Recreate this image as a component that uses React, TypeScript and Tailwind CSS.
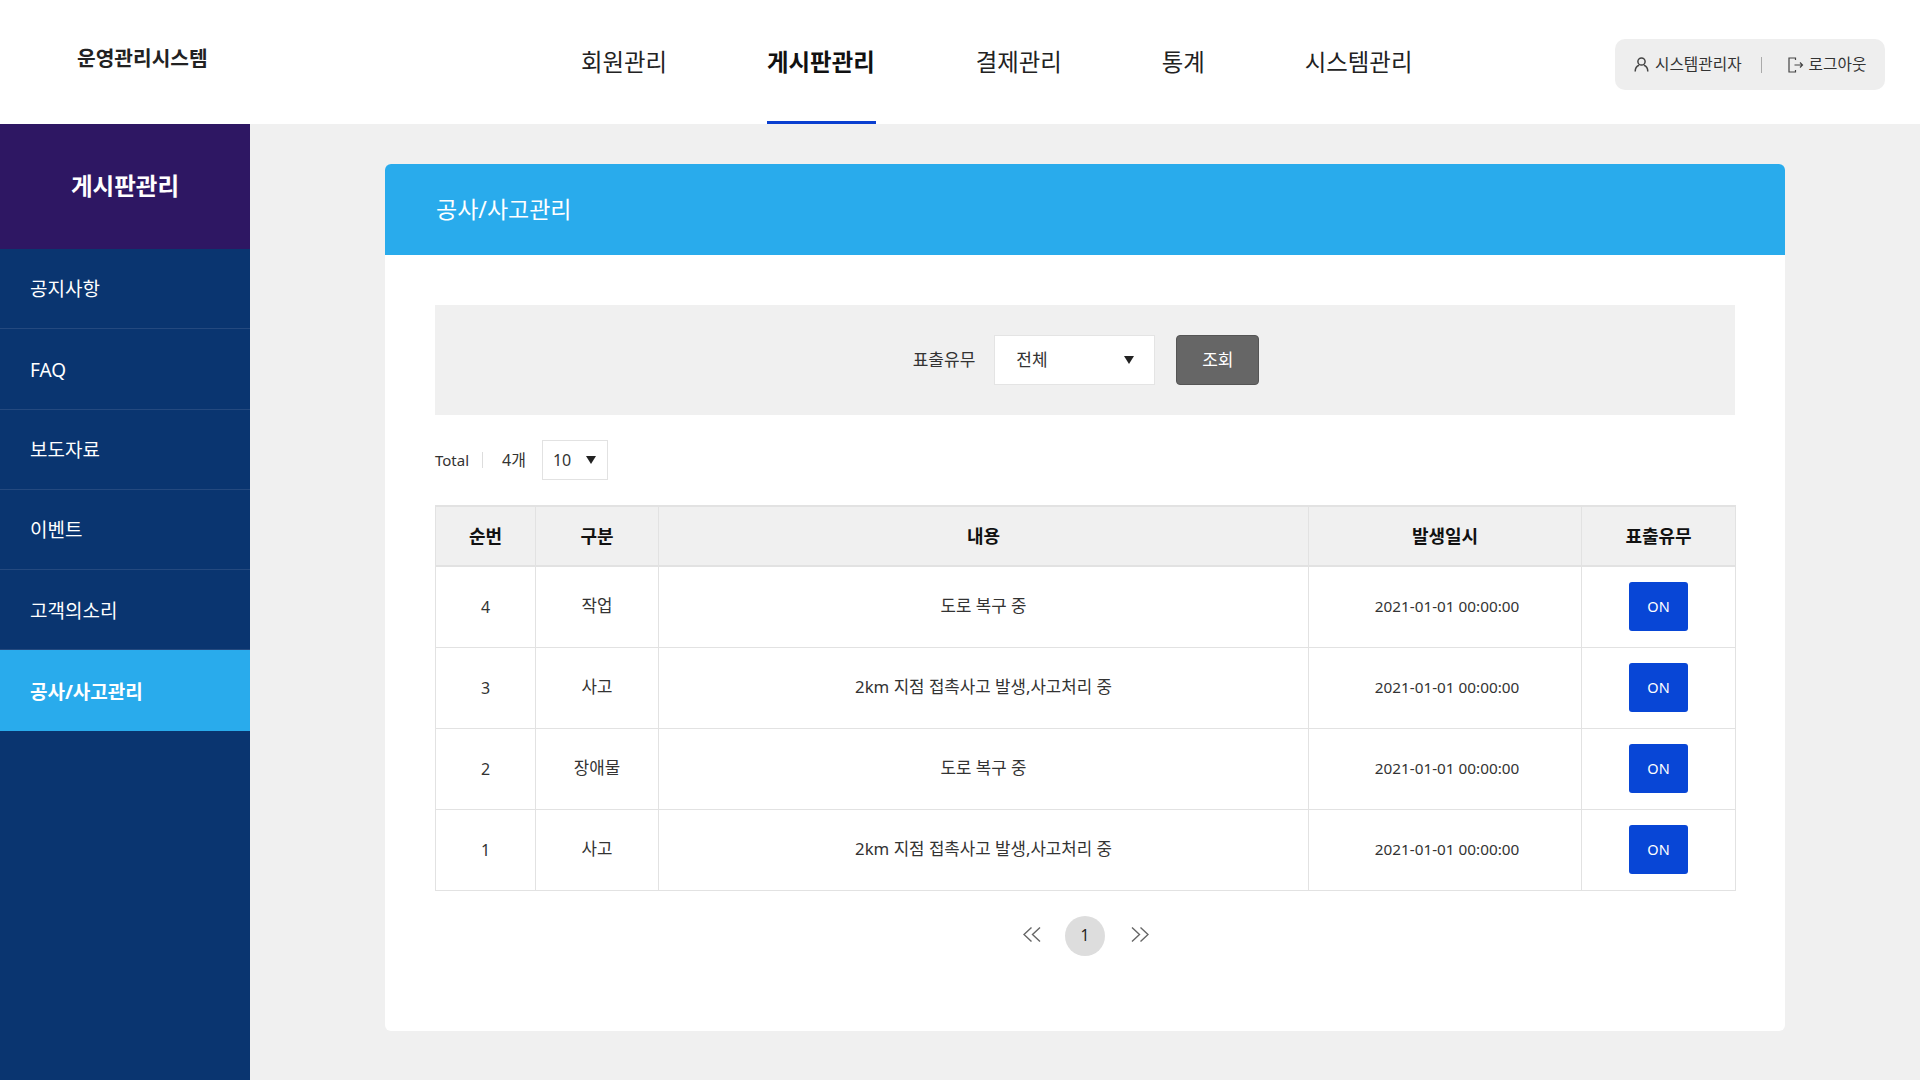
const FONT = 'font-["Noto_Sans","Noto_Sans_CJK_KR",sans-serif]'

const navItems = ['회원관리', '게시판관리', '결제관리', '통계', '시스템관리']
const sideItems = ['공지사항', 'FAQ', '보도자료', '이벤트', '고객의소리', '공사/사고관리']

const rows = [
  { no: 4, type: '작업', content: '도로 복구 중', date: '2021-01-01 00:00:00' },
  { no: 3, type: '사고', content: '2km 지점 접촉사고 발생,사고처리 중', date: '2021-01-01 00:00:00' },
  { no: 2, type: '장애물', content: '도로 복구 중', date: '2021-01-01 00:00:00' },
  { no: 1, type: '사고', content: '2km 지점 접촉사고 발생,사고처리 중', date: '2021-01-01 00:00:00' },
]

function Caret() {
  return (
    <svg width="10" height="8" viewBox="0 0 10 8" className="shrink-0">
      <path d="M0 0h10L5 8z" fill="#222" />
    </svg>
  )
}

function Header() {
  return (
    <header className="flex h-[124px] items-center bg-white">
      <div className="w-[581px] pb-[7px] pl-[77px] text-[20.3px] font-bold text-[#222]">운영관리시스템</div>
      <nav className="flex h-full gap-[100px]">
        {navItems.map((item) => (
          <a
            key={item}
            className={
              item === '게시판관리'
                ? 'flex items-center border-b-[3px] border-[#0a3fd0] pr-[1px] pt-[4px] text-[23.4px] font-bold text-[#111]'
                : 'flex items-center border-b-[3px] border-transparent pt-[4px] text-[23.4px] text-[#222]'
            }
          >
            {item}
          </a>
        ))}
      </nav>
      <div className="ml-auto mr-[35px] mb-[-5px] flex h-[51px] w-[270px] items-center rounded-[10px] bg-[#eeeeee] pl-[19px] text-[15.7px] text-[#333]">
        <svg width="15" height="15" viewBox="0 0 15 15" fill="none" stroke="#444" strokeWidth="1.5">
          <circle cx="7.5" cy="4.5" r="3.6" />
          <path d="M1.2 14.5c0-3.6 2.4-5.7 3.9-6.2M13.8 14.5c0-3.6-2.4-5.7-3.9-6.2" />
        </svg>
        <span className="ml-[6px]">시스템관리자</span>
        <span className="ml-[19px] h-[16px] w-px bg-[#aaa]" />
        <svg className="ml-[26px]" width="16" height="16" viewBox="0 0 16 16" fill="none" stroke="#444" strokeWidth="1.2">
          <path d="M7.5 3V1H1v14h6.5v-2" />
          <path d="M6.5 8h8M12 5.5 14.5 8 12 10.5" />
        </svg>
        <span className="ml-[5px]">로그아웃</span>
      </div>
    </header>
  )
}

function Sidebar() {
  return (
    <aside className="flex w-[250px] shrink-0 flex-col bg-[#0a3570]">
      <div className="flex h-[125px] items-center justify-center bg-[#2e1763] pt-[1px] text-[23.5px] font-bold text-white">
        게시판관리
      </div>
      {sideItems.map((item) => (
        <a
          key={item}
          className={
            item === '공사/사고관리'
              ? 'flex h-[81px] items-center bg-[#29abec] pl-[30px] pt-[2px] text-[19px] font-bold text-white'
              : 'flex h-[80.3px] items-center border-b border-[#24497f] pl-[30px] pt-[2px] text-[19px] text-white'
          }
        >
          {item}
        </a>
      ))}
    </aside>
  )
}

function Pagination() {
  return (
    <div className="mt-[25px] flex items-center justify-center pl-[2px]">
      <svg className="mb-[3px] mr-[24px]" width="18" height="15" viewBox="0 0 18 15" fill="none" stroke="#666" strokeWidth="1.4">
        <path d="M8.5 0.5 1 7.5l7.5 7M17 0.5 9.5 7.5l7.5 7" />
      </svg>
      <span className="flex h-[40px] w-[40px] items-center justify-center rounded-full bg-[#dddddd] text-[15.5px] text-[#222]">
        1
      </span>
      <svg className="mb-[3px] ml-[26px]" width="18" height="15" viewBox="0 0 18 15" fill="none" stroke="#666" strokeWidth="1.4">
        <path d="M1 0.5 8.5 7.5 1 14.5M9.5 0.5 17 7.5l-7.5 7" />
      </svg>
    </div>
  )
}

function BoardTable() {
  return (
    <table className="mt-[25px] w-[1300px] table-fixed border-collapse text-center text-[16.8px] text-[#333]">
      <colgroup>
        <col className="w-[100px]" />
        <col className="w-[123px]" />
        <col className="w-[650px]" />
        <col className="w-[273px]" />
        <col className="w-[154px]" />
      </colgroup>
      <thead>
        <tr className="h-[60px] bg-[#f0f0f0] text-[18px] font-bold text-[#111]">
          {['순번', '구분', '내용', '발생일시', '표출유무'].map((h) => (
            <th key={h} className="border-2 border-x border-[#e2e2e2]">
              {h}
            </th>
          ))}
        </tr>
      </thead>
      <tbody>
        {rows.map((row) => (
          <tr key={row.no} className="h-[81px]">
            <td className="border border-[#e2e2e2] text-[16px]">{row.no}</td>
            <td className="border border-[#e2e2e2] pb-[2px]">{row.type}</td>
            <td className="border border-[#e2e2e2] pb-[2px]">{row.content}</td>
            <td className="border border-[#e2e2e2] pl-[4px] text-[15.3px]">{row.date}</td>
            <td className="border border-[#e2e2e2]">
              <button className="h-[49px] w-[59px] rounded-[3px] bg-[#0846d6] text-[14.5px] text-white">ON</button>
            </td>
          </tr>
        ))}
      </tbody>
    </table>
  )
}

export default function App() {
  return (
    <div className={`flex h-[1080px] flex-col overflow-hidden bg-[#f0f0f0] ${FONT}`}>
      <Header />
      <div className="flex flex-1">
        <Sidebar />
        <main className="flex-1 pl-[135px] pt-[40px]">
          <section className="h-[867px] w-[1400px] rounded-[6px] bg-white">
            <div className="flex h-[91px] items-center rounded-t-[6px] bg-[#29abec] pl-[51px] text-[23px] text-white">
              공사/사고관리
            </div>
            <div className="px-[50px] pt-[50px]">
              <div className="flex h-[110px] items-center justify-center bg-[#f0f0f0] pl-[2px]">
                <span className="text-[17px] text-[#333]">표출유무</span>
                <div className="ml-[19px] flex h-[50px] w-[161px] items-center justify-between border border-[#e4e4e4] bg-white pl-[21px] pr-[20px] text-[17px] text-[#333]">
                  전체
                  <Caret />
                </div>
                <button className="ml-[21px] h-[50px] w-[83px] rounded-[4px] border border-[#555] bg-[#666666] text-[17px] text-white">
                  조회
                </button>
              </div>
              <div className="mt-[25px] flex h-[40px] items-center text-[16px] text-[#333]">
                <span className="text-[15px]">Total</span>
                <span className="ml-[13px] h-[16px] w-px bg-[#ddd]" />
                <span className="ml-[19px]">4개</span>
                <div className="ml-[16px] flex h-[40px] w-[66px] items-center justify-between border border-[#e2e2e2] bg-white pl-[10px] pr-[11px] text-[16px]">
                  10
                  <Caret />
                </div>
              </div>
              <BoardTable />
              <Pagination />
            </div>
          </section>
        </main>
      </div>
    </div>
  )
}
